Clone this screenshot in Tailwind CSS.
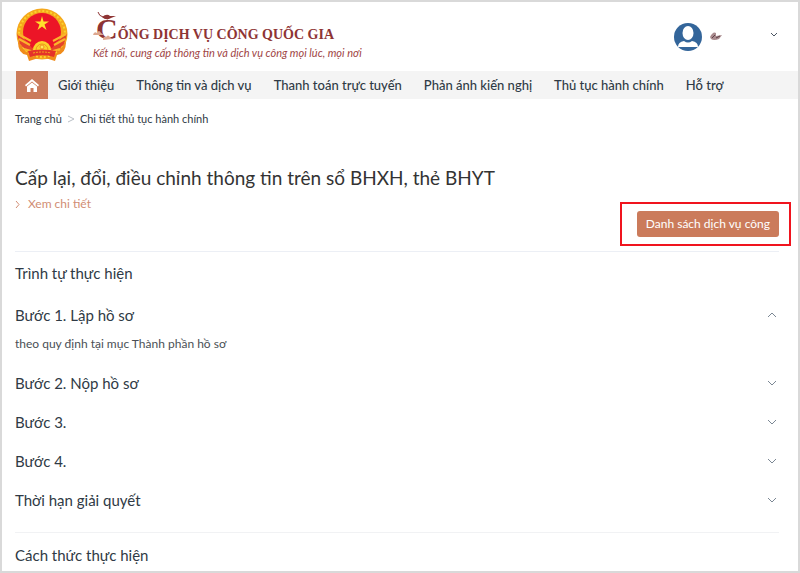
<!DOCTYPE html>
<html lang="vi">

<head>
  <meta charset="UTF-8" />
  <meta name="viewport" content="width=device-width, initial-scale=1.0" />
  <title>Cổng Dịch vụ công Quốc gia</title>
  <script src="https://cdn.jsdelivr.net/npm/@tailwindcss/browser@4"></script>
</head>

<body class="min-h-screen border-2 border-[#d9d9d9] bg-white font-[Lato,'Noto_Sans',sans-serif] text-[#2f3a45]">
  <header class="flex h-[69px] items-center justify-between pr-5 pl-[13px]">
    <div class="flex items-center gap-6">
      <!-- Quốc huy -->
      <svg class="mb-1 h-[54px] w-[54px]" viewBox="0 0 54 54" aria-hidden="true">
        <circle cx="27" cy="26" r="25.500" fill="#f5a81c" />
        <path d="M3 34 Q3 46 12 47 L14 53 L27 49 L40 53 L42 47 Q51 46 51 34 L43 39 H11Z" fill="#f08c1b" />
        <circle cx="27" cy="26" r="23" fill="none" stroke="#fbd32c" stroke-width="2" stroke-dasharray="2 2" />
        <circle cx="27" cy="24" r="19" fill="#ec1527" />
        <path d="M27 8 L28.500 13.500 H34 L29.500 16.500 L31.500 22 L27 18.500 L22.500 22 L24.500 16.500 L20 13.500 H25.500Z" fill="#ffe02c" />
        <path d="M2 26 L13 34 L18 42 L12 43 L5 36Z M52 26 L41 34 L36 42 L42 43 L49 36Z" fill="#e5432a" />
        <path d="M3 26 L16 33 M4 31 L15 37 M51 26 L38 33 M50 31 L39 37 M9 41 L16 43 M45 41 L38 43" stroke="#fbb52b" stroke-width="2" />
        <path d="M18 42 A9 9 0 0 1 36 42Z" fill="#fbd32c" />
        <path d="M21 42 A6 6 0 0 1 33 42" fill="none" stroke="#f0941d" />
        <circle cx="27" cy="39" r="2" fill="#ffe95a" stroke="#f0941d" />
        <path d="M13 43 Q27 40 41 43 L39 49 Q27 45 15 49Z" fill="#e5332a" />
        <path d="M18 45 Q27 43 36 45" fill="none" stroke="#f5a81c" stroke-dasharray="2 1" />
      </svg>
      <div>
        <div class="relative flex h-8 items-baseline pl-[3px] font-['Liberation_Serif',serif] font-bold whitespace-nowrap text-[#8e3434]">
          <!-- đầu chim Lạc và mây quanh chữ C -->
          <svg class="absolute -top-0.5 left-0 h-8 w-[26px]" viewBox="0 0 26 32" fill="none" aria-hidden="true">
            <path d="M5 1 Q6 5 10 6 L15 8" stroke="#8e3434" />
            <path d="M9 6 Q14 2 17 5 L23 5 L18 7 Q13 10 9 6Z" fill="#8e3434" />
            <path d="M0 24 Q1 20 4 22 Q6 18 8 22 L11 24Z" fill="#dda78f" />
            <path d="M10 29 Q10 25 13 26 Q15 23 17 26 L19 28Z" fill="#dda78f" />
          </svg>
          <span class="text-[30px] leading-8">C</span>
          <span class="text-[14px] leading-8">ỐNG DỊCH VỤ CÔNG QUỐC GIA</span>
        </div>
        <p class="text-[11px] leading-4 text-[#a04545] italic">Kết nối, cung cấp thông tin và dịch vụ công mọi lúc, mọi nơi</p>
      </div>
    </div>
    <button type="button" class="flex items-center" aria-label="Tài khoản">
      <svg class="h-7 w-7" viewBox="0 0 28 28">
        <circle cx="14" cy="14" r="14" fill="#33659a" />
        <ellipse cx="14" cy="10" rx="5.500" ry="7" fill="#fff" />
        <path d="M4 24 Q4 19 10 18 Q14 21 18 18 Q24 19 24 24Z" fill="#fff" />
      </svg>
      <svg class="ml-2 h-3 w-[60px]" viewBox="0 0 60 12">
        <path d="M0 6 Q3 0 6 2 L6 5 L12 4 L9 8 Q4 10 1 8Z" fill="#a98b8e" />
        <path d="M2 7 L5 4 M6 7 L10 5" stroke="#5e4048" />
      </svg>
      <svg class="mb-1 h-2 w-2" viewBox="0 0 8 8" fill="none" stroke="#4b5563"><path d="M1 2 L4 5 L7 2" /></svg>
    </button>
  </header>

  <nav class="flex h-7 items-center gap-[22px] bg-[#f4f4f4] pl-[14px] text-[13px] leading-5 font-medium whitespace-nowrap">
    <a href="#" class="-mr-3 flex h-7 w-8 items-center justify-center bg-[#cb7b5b]" aria-label="Trang chủ">
      <svg class="h-[13px] w-[14px]" viewBox="0 0 14 13" fill="#fff">
        <path d="M7 0 L14 6 L13 7.500 L7 2.500 L1 7.500 L0 6Z" />
        <path d="M7 3.500 L12 7.500 V13 H8.500 V9 H5.500 V13 H2 V7.500Z" />
      </svg>
    </a>
    <a href="#">Giới thiệu</a>
    <a href="#">Thông tin và dịch vụ</a>
    <a href="#">Thanh toán trực tuyến</a>
    <a href="#">Phản ánh kiến nghị</a>
    <a href="#">Thủ tục hành chính</a>
    <a href="#">Hỗ trợ</a>
  </nav>

  <main class="pr-[19px] pl-[13px]">
    <div class="flex items-center gap-1.5 pt-3 text-[11px] leading-4">
      <a href="#">Trang chủ</a>
      <svg class="h-2 w-1.5" viewBox="0 0 6 8" fill="none" stroke="#b8bec5"><path d="M0 1 L6 4 L0 7" /></svg>
      <span>Chi tiết thủ tục hành chính</span>
    </div>

    <section class="border-b border-[#eceff5] pt-[37px] pb-[5px]">
      <h1 class="text-[19px] leading-7 text-[#333]">Cấp lại, đổi, điều chỉnh thông tin trên sổ BHXH, thẻ BHYT</h1>
      <div class="flex items-start justify-between">
        <a href="#" class="flex items-center gap-2 pt-1 text-xs leading-4 text-[#d18d73]">
          <svg class="h-[7px] w-[5px]" viewBox="0 0 5 7" fill="none" stroke="currentColor"><path d="M1 0 L4 3.500 L1 7" /></svg>
          Xem chi tiết
        </a>
        <div class="-mr-3 mt-2.5 flex border-2 border-[#f0141e] px-2.5 py-[7px] pl-[15px]">
          <button type="button" class="h-[26px] rounded-[3px] bg-[#cb7b5b] px-[9px] text-xs text-white">Danh sách dịch vụ công</button>
        </div>
      </div>
    </section>

    <section class="border-b border-[#f1f2f4] pt-[11px] pb-[22px] text-[15px] leading-5">
      <h2>Trình tự thực hiện</h2>
      <button type="button" class="mt-[22px] flex w-full items-center justify-between pr-[3px]" aria-expanded="true">
        Bước 1. Lập hồ sơ
        <svg class="h-2 w-2" viewBox="0 0 8 8" fill="none" stroke="#7b8794"><path d="M0 6 L4 2 L8 6" /></svg>
      </button>
      <p class="mt-[11px] text-xs leading-4 text-[#4a4f55]">theo quy định tại mục Thành phần hồ sơ</p>
      <div class="mt-[21px] flex flex-col gap-[19px]">
        <button type="button" class="flex w-full items-center justify-between pr-[3px]">
          Bước 2. Nộp hồ sơ
          <svg class="h-2 w-2" viewBox="0 0 8 8" fill="none" stroke="#7b8794"><path d="M0 2 L4 6 L8 2" /></svg>
        </button>
        <button type="button" class="flex w-full items-center justify-between pr-[3px]">
          Bước 3.
          <svg class="h-2 w-2" viewBox="0 0 8 8" fill="none" stroke="#7b8794"><path d="M0 2 L4 6 L8 2" /></svg>
        </button>
        <button type="button" class="flex w-full items-center justify-between pr-[3px]">
          Bước 4.
          <svg class="h-2 w-2" viewBox="0 0 8 8" fill="none" stroke="#7b8794"><path d="M0 2 L4 6 L8 2" /></svg>
        </button>
        <button type="button" class="flex w-full items-center justify-between pr-[3px]">
          Thời hạn giải quyết
          <svg class="h-2 w-2" viewBox="0 0 8 8" fill="none" stroke="#7b8794"><path d="M0 2 L4 6 L8 2" /></svg>
        </button>
      </div>
    </section>

    <section class="pt-3 text-[15px] leading-5">
      <h2>Cách thức thực hiện</h2>
    </section>
  </main>
</body>

</html>
